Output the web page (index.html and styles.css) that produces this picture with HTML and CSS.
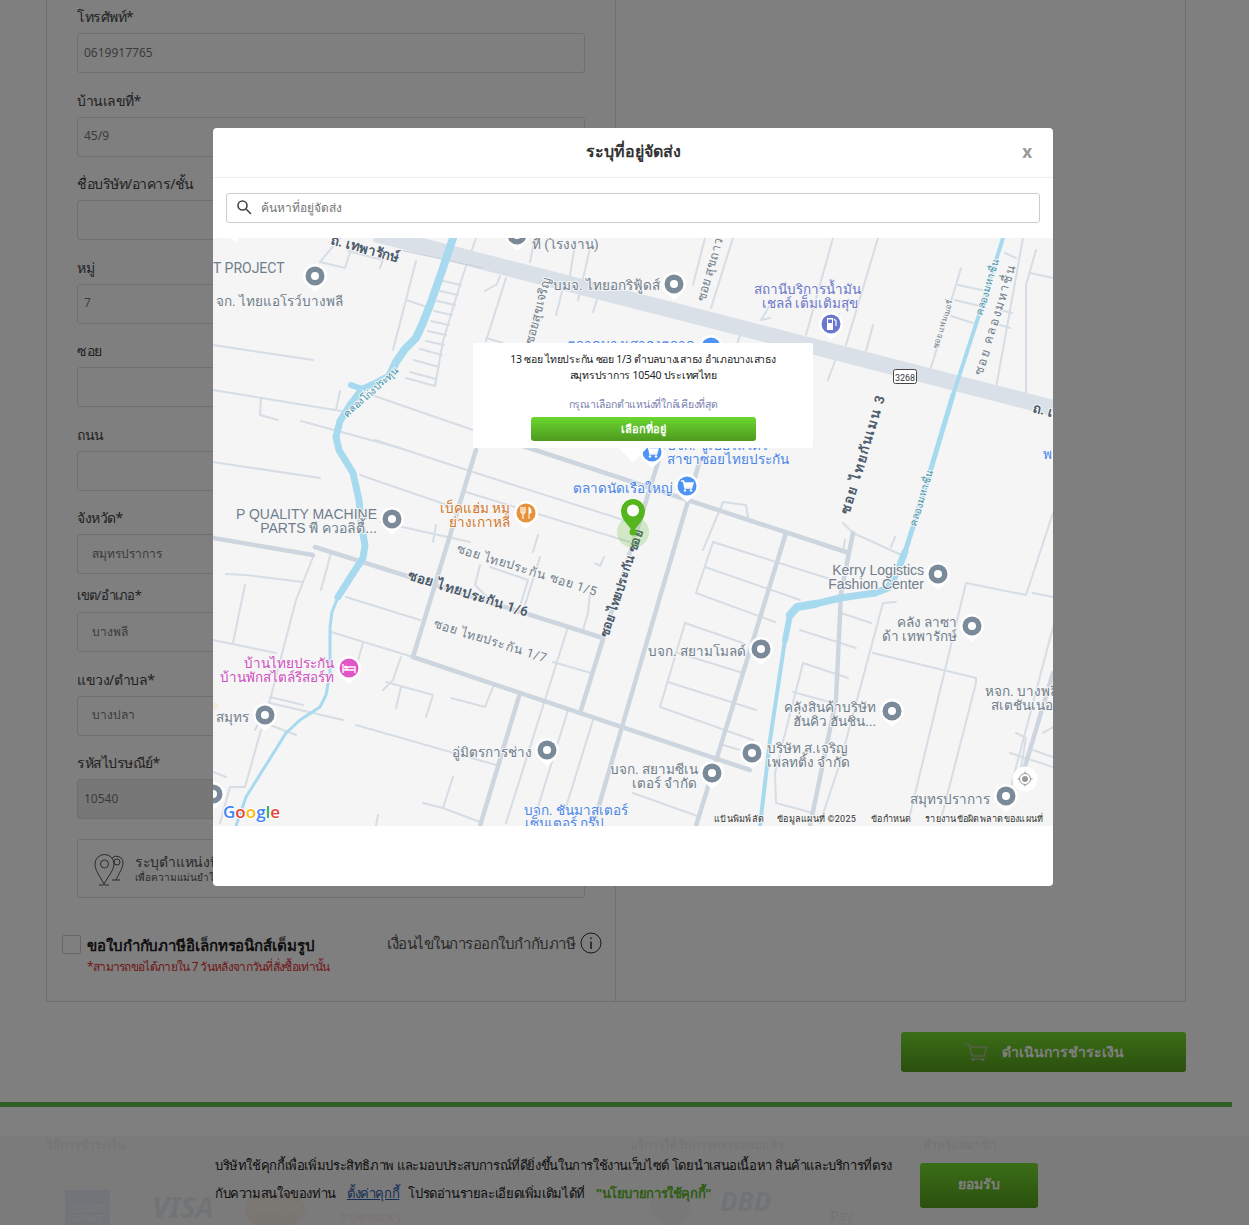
FILE: index.html
```html
<!DOCTYPE html>
<html lang="th">
<head>
  <meta charset="UTF-8">
  <meta name="viewport" content="width=device-width, initial-scale=1.0">
  <title>ระบุที่อยู่จัดส่ง</title>
  <link rel="stylesheet" href="styles.css">
</head>
<body>
  <div class="page">
    <div class="panel">
      <div class="col-left">
        <div class="field"><label>โทรศัพท์*</label><input type="text" value="0619917765" readonly></div>
        <div class="field"><label>บ้านเลขที่*</label><input type="text" value="45/9" readonly></div>
        <div class="field"><label>ชื่อบริษัท/อาคาร/ชั้น</label><input type="text" readonly></div>
        <div class="field"><label>หมู่</label><input type="text" value="7" readonly></div>
        <div class="field"><label>ซอย</label><input type="text" readonly></div>
        <div class="field"><label>ถนน</label><input type="text" readonly></div>
        <div class="field field-tight"><label>จังหวัด*</label><input class="indent" type="text" value="สมุทรปราการ" readonly></div>
        <div class="field"><label class="small">เขต/อำเภอ*</label><input class="indent" type="text" value="บางพลี" readonly></div>
        <div class="field"><label>แขวง/ตำบล*</label><input class="indent" type="text" value="บางปลา" readonly></div>
        <div class="field"><label>รหัสไปรษณีย์*</label><input class="disabled" type="text" value="10540" readonly></div>
        <div class="locate-box">
          <svg class="locate-icon" width="40" height="40" viewBox="0 0 40 40" fill="none" stroke="#555" stroke-width="1">
            <path d="M14 35 C9 26 5 21 5 15 A9.5 9.5 0 0 1 24 15 C24 21 19 26 14 35Z"/>
            <circle cx="14.500" cy="15" r="4"/>
            <path d="M9 36H19"/>
            <path d="M22 9 A6.500 6.500 0 0 1 33 14 C33 19 29 24 26 31"/>
            <circle cx="27" cy="13" r="3"/>
            <path d="M22 31H30"/>
          </svg>
          <div>
            <div class="locate-title">ระบุตำแหน่งที่จัดส่งบนแผนที่</div>
            <div class="locate-sub">เพื่อความแม่นยำในการจัดส่งสินค้า</div>
          </div>
        </div>
        <div class="tax-row">
          <span class="checkbox"></span>
          <div class="tax-text">
            <div class="tax-title">ขอใบกำกับภาษีอิเล็กทรอนิกส์เต็มรูป</div>
            <div class="tax-note">*สามารถขอได้ภายใน 7 วันหลังจากวันที่สั่งซื้อเท่านั้น</div>
          </div>
          <div class="tax-terms">เงื่อนไขในการออกใบกำกับภาษี
            <svg width="22" height="22" viewBox="0 0 22 22" fill="none" stroke="#333" stroke-width="1">
              <circle cx="11" cy="11" r="10"/>
              <path d="M11 9.500V17" stroke-width="1.500"/>
              <path d="M11 5.500V7" stroke-width="1.500"/>
            </svg>
          </div>
        </div>
      </div>
    </div>

    <div class="order-row">
      <button class="btn-order">
        <svg width="24" height="20" viewBox="0 0 24 20" fill="none" stroke="#bbb" stroke-width="1.200">
          <path d="M1 2H5L8 14H20L23 5H6"/>
          <path d="M7 17H21"/>
          <path d="M9 17V19M19 17V19" stroke-width="2"/>
        </svg>
        ดำเนินการชำระเงิน
      </button>
    </div>

    <div class="green-line"></div>

    <div class="footer">
      <div class="footer-cols">
        <div class="foot-title">วิธีการชำระเงิน</div>
        <div class="foot-title">บริการได้รับการตรวจสอบแล้ว</div>
        <div class="foot-title">สำหรับสมาชิก</div>
      </div>
      <div class="foot-logos">
        <span class="logo-counter">COUNTER SERVICE</span>
        <span class="logo-visa">VISA</span>
        <span class="logo-master">MasterCard</span>
        <span class="logo-true">truemoney</span>
        <span class="logo-ssl">SSL</span>
        <span class="logo-dbd">DBD</span>
        <span class="logo-pay">Pay</span>
      </div>
      <div class="cookie-bar">
        <div class="cookie-text">
          <p>บริษัทใช้คุกกี้เพื่อเพิ่มประสิทธิภาพ และมอบประสบการณ์ที่ดียิ่งขึ้นในการใช้งานเว็บไซต์ โดยนำเสนอเนื้อหา สินค้าและบริการที่ตรง</p>
          <p>กับความสนใจของท่าน <a class="cookie-link" href="#">ตั้งค่าคุกกี้</a> โปรดอ่านรายละเอียดเพิ่มเติมได้ที่ <b class="cookie-policy">"นโยบายการใช้คุกกี้"</b></p>
        </div>
        <button class="btn-accept">ยอมรับ</button>
      </div>
    </div>
  </div>

  <div class="overlay"></div>

  <div class="modal">
    <div class="modal-head">
      <h4>ระบุที่อยู่จัดส่ง</h4>
      <span class="modal-close">x</span>
    </div>
    <div class="search-wrap">
      <div class="search-box">
        <svg width="16" height="16" viewBox="0 0 16 16" fill="none" stroke="#444" stroke-width="1.600">
          <circle cx="6.500" cy="6.500" r="4.500"/>
          <path d="M10 10L15 15"/>
        </svg>
        <span>ค้นหาที่อยู่จัดส่ง</span>
      </div>
    </div>
    <div class="map">
      <svg class="map-svg" width="840" height="588" viewBox="213 238 840 588">
        <defs>
          <g id="pin">
            <path class="pin-halo" d="M0 16 L-8 9 A12 12 0 1 1 8 9Z"/>
            <circle r="9.500"/>
          </g>
          <g id="pin-gray">
            <use href="#pin" fill="#7b8a99"/>
            <circle r="4" fill="#fff"/>
          </g>
          <g id="ico-cart" fill="#fff">
            <path d="M-6 -5H-3.500L-2 2H4.500L6 -3H-3" fill="none" stroke="#fff" stroke-width="1.500"/>
            <path d="M-3 -3H5.500L4 1.500H-2Z"/>
            <circle cx="-2" cy="4.500" r="1.200"/>
            <circle cx="4" cy="4.500" r="1.200"/>
          </g>
        </defs>

        <rect x="213" y="238" width="840" height="588" fill="#f5f5f5"/>
        <path d="M213 700 L219 706 L213 712Z" fill="#f3eddc"/>

        <g class="road-thin">
          <!-- north west -->
          <path d="M213 345L313 360"/>
          <path d="M213 390L341 411"/>
          <path d="M261 398L260 415L278 420"/>
          <path d="M340 391L336 410"/>
          <path d="M301 421L400 448"/>
          <path d="M416 261L393 350"/>
          <path d="M406 300L430 308"/>
          <path d="M476 238L463 275L443 341L435 386L406 378"/>
          <path d="M461 285L443 281M458 295L440 291M455 305L437 301M452 315L434 311M449 325L431 321M446 335L428 331M444 345L426 341M442 355L420 349M439 367L414 360M436 379L410 372"/>
          <path d="M506 278L486 341"/>
          <path d="M486 338L503 343"/>
          <path d="M360 391L473 430"/>
          <path d="M340 238L320 262L345 268L353 243"/>
          <path d="M348 251L383 260L380 268"/>
          <path d="M500 276L497 284L485 291"/>
          <path d="M556 315L563 288"/>
          <path d="M575 245L570 275M590 248L578 300M600 290L593 312"/>
          <path d="M535 238L530 262"/>
          <!-- north east -->
          <path d="M705 238L693 285"/>
          <path d="M733 238L711 308"/>
          <path d="M833 238L806 335"/>
          <path d="M878 238L846 345"/>
          <path d="M873 325L866 351"/>
          <path d="M836 358L828 380"/>
          <path d="M961 268L930 371"/>
          <path d="M958 285L986 291M955 300L980 306M951 316L973 323"/>
          <path d="M1023 238L996 388"/>
          <path d="M1036 250L1026 285L1026 395"/>
          <path d="M1030 273L1053 278"/>
          <path d="M1005 253L1016 258"/>
          <path d="M740 335L733 358"/>
          <path d="M770 305L761 320L770 318"/>
          <path d="M1000 310L1012 313M1000 325L1010 328"/>
          <!-- middle west -->
          <path d="M213 462L320 478"/>
          <path d="M375 440L476 473L633 523"/>
          <path d="M360 475L453 507"/>
          <path d="M466 492L633 543"/>
          <path d="M380 522L470 542"/>
          <path d="M436 525L433 542"/>
          <path d="M538 535L533 552"/>
          <path d="M480 565L475 585L490 600L520 613"/>
          <path d="M490 567L528 580L521 603"/>
          <path d="M540 557L525 605"/>
          <path d="M604 557L600 566L595 563"/>
          <path d="M590 593L588 613"/>
          <path d="M588 613L583 630"/>
          <path d="M226 574L246 575L303 582"/>
          <path d="M245 585L233 643"/>
          <path d="M213 640L276 653"/>
          <path d="M331 553L321 590"/>
          <path d="M313 557L296 600L270 700L255 730"/>
          <path d="M346 597L420 620"/>
          <path d="M331 632L413 657"/>
          <path d="M363 643L356 667"/>
          <path d="M401 657L393 680L383 690"/>
          <path d="M386 682L433 695L426 717"/>
          <path d="M401 687L396 708"/>
          <path d="M451 698L485 707L493 687"/>
          <path d="M270 697L303 705"/>
          <path d="M270 703L343 720"/>
          <path d="M270 725L296 735"/>
          <path d="M356 725L496 765"/>
          <path d="M213 772L226 777"/>
          <path d="M261 730L245 787L230 787L220 823"/>
          <path d="M453 777L443 808L480 822"/>
          <path d="M423 803L443 808"/>
          <path d="M378 815L376 826"/>
          <path d="M568 627L506 823"/>
          <path d="M568 710L533 823"/>
          <path d="M593 720L566 807"/>
          <path d="M553 662L591 673"/>
          <!-- middle east -->
          <path d="M723 502L746 505L748 518"/>
          <path d="M723 502L703 550"/>
          <path d="M713 542L696 593L775 622"/>
          <path d="M713 542L833 580"/>
          <path d="M705 567L800 600"/>
          <path d="M685 623L660 707L753 740"/>
          <path d="M685 623L743 643"/>
          <path d="M678 653L743 673"/>
          <path d="M668 682L756 710"/>
          <path d="M633 793L700 817"/>
          <path d="M723 745L740 750"/>
          <path d="M800 630L856 648"/>
          <path d="M841 613L871 623"/>
          <path d="M803 663L848 678"/>
          <path d="M803 663L775 773L776 803L813 813"/>
          <path d="M793 692L833 703"/>
          <path d="M896 602L883 603L840 763L820 823"/>
          <path d="M873 653L976 678L976 683L940 823"/>
          <path d="M966 583L908 823"/>
          <path d="M966 583L1026 595L1053 513"/>
          <path d="M1033 593L1053 597"/>
          <path d="M1053 627L1010 790"/>
          <path d="M1016 733L1026 738L1020 773"/>
          <path d="M1010 753L1053 767"/>
          <path d="M1033 750L1053 757"/>
          <path d="M1043 733L1053 727"/>
          <path d="M853 533L906 557"/>
          <path d="M895 537L891 547"/>
          <path d="M843 523L853 533"/>
          <path d="M845 540L843 552"/>
        </g>

        <g class="road-mid">
          <path d="M213 538L313 555"/>
          <path d="M315 547L600 637"/>
          <path d="M413 657L750 770"/>
          <path d="M520 445L846 552"/>
          <path d="M476 450L413 657"/>
          <path d="M665 440L581 710"/>
          <path d="M700 460L593 826"/>
          <path d="M786 533L696 826"/>
          <path d="M520 693L480 826"/>
          <path d="M853 533L841 593L836 700L810 826"/>
          <path d="M1053 673L1023 773"/>
        </g>

        <path class="road-main" d="M375 234L1053 408"/>
        <path class="road-line" d="M400 250L483 268"/>

        <path class="river river-w8" d="M453 238L443 268L436 288L430 305L422 325L416 338L405 349L396 362L390 375"/>
        <path class="river river-w6" d="M390 375L375 383L362 389L351 385"/>
        <path class="river river-w7" d="M362 389L350 405L340 421L336 437L339 450L353 473L359 500L361 523L365 545L363 558L350 578L338 597"/>
        <path class="river river-w3" d="M338 597L332 612L330 627L330 673L326 695L320 707L300 720L286 733L266 765L246 797L236 826"/>
        <path class="river river-w4" d="M1003 238L978 318L953 395"/>
        <path class="river river-w5" d="M953 395L930 472L913 527L905 552"/>
        <path class="river river-w7" d="M905 552L897 572L888 588L875 593L840 598L815 604"/>
        <path class="river river-w8" d="M815 604L797 607L790 615"/>
        <path class="river river-w6" d="M790 615L785 640"/>
        <path class="river river-w4" d="M785 640L770 740L760 826"/>

        <text class="lbl dark bold" transform="translate(330 244) rotate(15)">ถ. เทพารักษ์</text>
        <text class="lbl" x="532" y="249">ที (โรงงาน)</text>
        <text class="lbl roboto" x="213" y="273">T PROJECT</text>
        <text class="lbl end" x="343" y="306">จก. ไทยแอโรว์บางพลี</text>
        <text class="lbl end" x="660" y="290">บมจ. ไทยอกริฟู้ดส์</text>
        <text class="lbl sm" transform="translate(533 345) rotate(-75)">ซอยสุขเจริญ</text>
        <text class="lbl sm" transform="translate(705 302) rotate(-74)">ซอย สุขถาวร</text>
        <text class="lbl purple mid" x="807" y="294">สถานีบริการน้ำมัน</text>
        <text class="lbl purple mid" x="810" y="308">เชลล์ เต็มเติมสุข</text>
        <text class="lbl blue" x="567" y="349">ตลาดบางเสาธงตลาด</text>
        <text class="lbl teal xs" transform="translate(347 418) rotate(-42)">คลองโก่งประทุน</text>
        <text class="lbl dark bold road-wider" transform="translate(849 515) rotate(-73)">ซอย ไทยกันเมน 3</text>
        <text class="lbl xxs" transform="translate(938 349) rotate(-73)">ซอย แฟมเมอรี่</text>
        <text class="lbl teal xs" transform="translate(982 316) rotate(-73)">คลองมหาชื่น</text>
        <text class="lbl sm road-wider" transform="translate(982 376) rotate(-73)">ซอย คลองมหาชื่น</text>
        <text class="lbl dark bold" transform="translate(1032 412) rotate(15)">ถ. เ</text>
        <text class="lbl teal xs" transform="translate(916 527) rotate(-73)">คลองมหาชื่น</text>
        <text class="lbl blue" x="1043" y="459">พ</text>
        <text class="lbl blue" x="667" y="450">บจก. ซูเปอร์สโตร์</text>
        <text class="lbl blue" x="667" y="464">สาขาซอยไทยประกัน</text>
        <text class="lbl blue end" x="673" y="493">ตลาดนัดเรือใหญ่</text>
        <text class="lbl orange end" x="510" y="513">เบ็คแฮ่ม หมู</text>
        <text class="lbl orange end" x="510" y="527">ย่างเกาหลี</text>
        <text class="lbl latin end" x="377" y="519">P QUALITY MACHINE</text>
        <text class="lbl latin end" x="377" y="533">PARTS พี ควอลิตี้...</text>
        <text class="lbl sm road-wide" transform="translate(456 552) rotate(17.500)">ซอย ไทยประกัน ซอย 1/5</text>
        <text class="lbl dark bold road-wide" transform="translate(407 579) rotate(17.500)">ซอย ไทยประกัน 1/6</text>
        <text class="lbl sm road-wide" transform="translate(433 627) rotate(17.500)">ซอย ไทยประกัน 1/7</text>
        <text class="lbl dark bold sm" transform="translate(608 638) rotate(-72)">ซอย ไทยประกัน ซอย</text>
        <text class="lbl pink end" x="334" y="668">บ้านไทยประกัน</text>
        <text class="lbl pink end" x="334" y="682">บ้านพักสไตล์รีสอร์ท</text>
        <text class="lbl end" x="249" y="722">สมุทร</text>
        <text class="lbl end" x="532" y="757">อู่มิตรการช่าง</text>
        <text class="lbl end" x="746" y="656">บจก. สยามโมลด์</text>
        <text class="lbl latin end" x="924" y="575">Kerry Logistics</text>
        <text class="lbl latin end" x="924" y="589">Fashion Center</text>
        <text class="lbl end" x="957" y="627">คลัง ลาซา</text>
        <text class="lbl end" x="957" y="641">ด้า เทพารักษ์</text>
        <text class="lbl" x="985" y="696">หจก. บางพลี</text>
        <text class="lbl" x="991" y="710">สเตชันเนอรี่</text>
        <text class="lbl end" x="876" y="712">คลังสินค้าบริษัท</text>
        <text class="lbl end" x="876" y="726">ฮั่นคิว ฮันชิน...</text>
        <text class="lbl" x="767" y="753">บริษัท ส.เจริญ</text>
        <text class="lbl" x="767" y="767">เพลทติ้ง จำกัด</text>
        <text class="lbl end" x="698" y="774">บจก. สยามซีเน</text>
        <text class="lbl end" x="697" y="788">เตอร์ จำกัด</text>
        <text class="lbl blue" x="524" y="815">บจก. ชันมาสเตอร์</text>
        <text class="lbl blue" x="525" y="828">เซ็นเตอร์ กรุ๊ป</text>
        <text class="lbl end" x="990" y="804">สมุทรปราการ</text>

        <g class="shield">
          <rect x="893.500" y="369.500" width="23" height="14" rx="2"/>
          <text x="905" y="381">3268</text>
        </g>

        <use href="#pin-gray" x="235" y="226"/>
        <use href="#pin-gray" x="517" y="235"/>
        <use href="#pin-gray" x="315" y="276"/>
        <use href="#pin-gray" x="674" y="284"/>
        <use href="#pin-gray" x="392" y="519"/>
        <use href="#pin-gray" x="265" y="715"/>
        <use href="#pin-gray" x="213" y="794"/>
        <use href="#pin-gray" x="547" y="750"/>
        <use href="#pin-gray" x="761" y="649"/>
        <use href="#pin-gray" x="938" y="574"/>
        <use href="#pin-gray" x="972" y="626"/>
        <use href="#pin-gray" x="892" y="711"/>
        <use href="#pin-gray" x="752" y="753"/>
        <use href="#pin-gray" x="712" y="773"/>
        <use href="#pin-gray" x="1006" y="796"/>

        <g transform="translate(831 324)">
          <use href="#pin" fill="#6b76cf"/>
          <path d="M-4 -6H2V6H-4Z M-3 -4.500V-1H1V-4.500Z" fill="#fff" fill-rule="evenodd"/>
          <path d="M3 -5L5 -3V2" fill="none" stroke="#fff" stroke-width="1.200"/>
        </g>
        <g transform="translate(711 347)">
          <use href="#pin" fill="#4e93f5"/>
        </g>
        <g transform="translate(652 452)">
          <use href="#pin" fill="#4e93f5"/>
          <use href="#ico-cart"/>
        </g>
        <g transform="translate(687 486)">
          <use href="#pin" fill="#4e93f5"/>
          <use href="#ico-cart"/>
        </g>
        <g transform="translate(526 513)">
          <use href="#pin" fill="#e8913a"/>
          <path d="M-5 -6V-1A1.500 1.500 0 0 0 -3 0V6M-3 -6V-1M-1 -6V-1A1.500 1.500 0 0 1 -3 0" fill="none" stroke="#fff" stroke-width="1.200"/>
          <path d="M3 6V-6C5 -5 5 -1 5 0H3" fill="#fff" stroke="#fff" stroke-width="1"/>
        </g>
        <g transform="translate(349 668)">
          <use href="#pin" fill="#e056c5"/>
          <path d="M-6 -4V5M-6 2H6V5M6 2V-1H-2V2" fill="none" stroke="#fff" stroke-width="1.300"/>
          <circle cx="-3.500" cy="-1" r="1.500" fill="#fff"/>
        </g>

        <circle class="marker-ring" cx="633" cy="532" r="16"/>
        <circle class="marker-dot" cx="633" cy="532" r="3.500"/>
        <path class="marker" d="M633 533 C630 525 621 521 621 511 A12 12 0 0 1 645 511 C645 521 636 525 633 533Z"/>
        <circle cx="633" cy="510.500" r="6" fill="#fff"/>

        <g class="locate-btn">
          <circle cx="1025" cy="779" r="12.500"/>
          <circle class="target" cx="1025" cy="779" r="5.500"/>
          <circle class="target-dot" cx="1025" cy="779" r="3"/>
          <path class="target" d="M1025 771.500V774M1025 784V786.500M1017.500 779H1020M1030 779H1032.500"/>
        </g>

        <text class="google" x="223" y="818"><tspan fill="#4285f4">G</tspan><tspan fill="#ea4335">o</tspan><tspan fill="#fbbc05">o</tspan><tspan fill="#4285f4">g</tspan><tspan fill="#34a853">l</tspan><tspan fill="#ea4335">e</tspan></text>
        <g class="attrib">
          <text x="714" y="822">แป้นพิมพ์ลัด</text>
          <text x="777" y="822">ข้อมูลแผนที่ ©2025</text>
          <text x="871" y="822">ข้อกำหนด</text>
          <text x="925" y="822">รายงานข้อผิดพลาดของแผนที่</text>
        </g>
      </svg>

      <div class="popup">
        <div class="popup-addr">13 ซอย ไทยประกัน ซอย 1/3 ตำบลบางเสาธง อำเภอบางเสาธง<br>สมุทรปราการ 10540 ประเทศไทย</div>
        <div class="popup-hint">กรุณาเลือกตำแหน่งที่ใกล้เคียงที่สุด</div>
        <button class="popup-btn">เลือกที่อยู่</button>
      </div>
    </div>
  </div>
</body>
</html>
```

FILE: styles.css
```css
html, body {
  margin: 0;
  padding: 0;
  height: 1225px;
  overflow: hidden;
}
body {
  font-family: "Noto Sans", "Open Sans", sans-serif;
  color: #333;
  background: #fff;
  position: relative;
}
.panel {
  margin-left: 46px;
  width: 1140px;
  height: 1002px;
  box-sizing: border-box;
  border: 1px solid #ddd;
  border-top: none;
}
.col-left {
  width: 569px;
  height: 100%;
  padding: 6px 0 0 30px;
  box-sizing: border-box;
  border-right: 1px solid #ddd;
}
.field {
  width: 508px;
  margin-bottom: 16.500px;
}
.field-tight {
  margin-bottom: 11px;
}
.field label {
  display: block;
  height: 20px;
  line-height: 21px;
  margin-bottom: 7px;
  font-size: 14px;
  letter-spacing: -0.5px;
  color: #444;
}
.field label.small {
  font-size: 13px;
}
.field input {
  display: block;
  width: 100%;
  height: 40px;
  box-sizing: border-box;
  padding: 0 6px 2px;
  font-family: inherit;
  font-size: 12px;
  color: #777;
  border: 1px solid #ddd;
  border-radius: 3px;
  background: #fff;
}
.field input.indent {
  padding-left: 14px;
}
.field input.disabled {
  background: #eee;
}
.locate-box {
  width: 508px;
  height: 59px;
  box-sizing: border-box;
  border: 1px solid #ddd;
  border-radius: 3px;
  margin-top: 20px;
  display: flex;
  align-items: center;
  gap: 5px;
  padding-left: 12px;
}
.locate-title {
  font-size: 14px;
  letter-spacing: -0.3px;
  color: #555;
  line-height: 18px;
}
.locate-sub {
  font-size: 10px;
  color: #555;
  line-height: 13px;
}
.tax-row {
  display: flex;
  margin: 34px 0 0 -15px;
  width: 540px;
}
.checkbox {
  flex: none;
  width: 17px;
  height: 17px;
  border: 1px solid #ccc;
  border-radius: 2px;
  background: #fff;
  margin: 3px 6px 0 0;
}
.tax-text {
  width: 300px;
  flex: none;
}
.tax-title {
  font-size: 15px;
  font-weight: 700;
  letter-spacing: -0.1px;
  color: #222;
  line-height: 26px;
}
.tax-note {
  font-size: 12px;
  letter-spacing: -0.7px;
  color: #d33;
  line-height: 18px;
}
.tax-terms {
  display: flex;
  align-items: flex-start;
  gap: 5px;
  font-size: 15px;
  letter-spacing: -0.5px;
  color: #555;
  line-height: 22px;
  white-space: nowrap;
}
.order-row {
  display: flex;
  justify-content: flex-end;
  width: 1186px;
  margin-top: 30px;
}
.btn-order {
  width: 285px;
  height: 40px;
  border: none;
  border-radius: 3px;
  background: linear-gradient(#76dc2e, #559f1c);
  color: #fff;
  font-family: inherit;
  font-size: 14px;
  font-weight: 700;
  display: flex;
  align-items: center;
  justify-content: center;
  gap: 14px;
}
.green-line {
  width: 1232px;
  height: 5px;
  margin-top: 30px;
  background: #5fbe4a;
}
.footer {
  position: relative;
  margin-top: 29px;
  height: 89px;
  overflow: hidden;
}
.footer-cols {
  display: flex;
  padding-left: 46px;
  font-size: 12px;
  line-height: 18px;
  color: #555;
}
.foot-title:nth-child(1) {
  width: 584px;
}
.foot-title:nth-child(2) {
  width: 293px;
}
.foot-logos {
  display: flex;
  align-items: flex-end;
  margin: 36px 0 0 65px;
  height: 35px;
  color: #2a6ea8;
  white-space: nowrap;
}
.logo-counter {
  width: 45px;
  height: 35px;
  background: #3a7fc0;
  color: #fff;
  font-size: 8px;
  line-height: 10px;
  padding-top: 14px;
  box-sizing: border-box;
  white-space: normal;
  text-align: center;
  overflow: hidden;
}
.logo-visa {
  margin-left: 42px;
  width: 62px;
  font-size: 29px;
  line-height: 36px;
  font-weight: 700;
  font-style: italic;
}
.logo-master {
  margin-left: 31px;
  width: 60px;
  height: 32px;
  border-radius: 16px;
  background: #e89a50;
  color: #fff;
  font-size: 9px;
  line-height: 32px;
  text-align: center;
}
.logo-true {
  margin-left: 35px;
  width: 60px;
  color: #e06030;
  font-size: 12px;
}
.logo-ssl {
  margin-left: 250px;
  width: 40px;
  height: 35px;
  border-radius: 50%;
  background: #ccc;
  font-size: 12px;
  line-height: 35px;
  text-align: center;
  color: #888;
}
.logo-dbd {
  margin-left: 30px;
  width: 80px;
  font-size: 26px;
  line-height: 48px;
  font-weight: 700;
  font-style: italic;
}
.logo-pay {
  margin-left: 30px;
  font-size: 14px;
}
.cookie-bar {
  position: absolute;
  inset: 0;
  background: rgba(245, 245, 245, 0.9);
  padding-left: 215px;
  display: flex;
  align-items: flex-start;
}
.cookie-text {
  width: 705px;
  flex: none;
  font-size: 13px;
  letter-spacing: -0.38px;
  color: #222;
  padding-top: 15px;
}
.cookie-text p {
  margin: 0;
  height: 28px;
  line-height: 28px;
  white-space: nowrap;
}
.cookie-link {
  color: #2a5caa;
  margin: 0 6px 0 8px;
}
.cookie-policy {
  color: #5fb82a;
  margin-left: 8px;
}
.btn-accept {
  width: 118px;
  height: 45px;
  margin-top: 27px;
  padding-bottom: 4px;
  border: none;
  border-radius: 3px;
  background: linear-gradient(#76dc2e, #559f1c);
  color: #fff;
  font-family: inherit;
  font-size: 14px;
  font-weight: 700;
}
.overlay {
  position: absolute;
  inset: 0;
  background: rgba(0, 0, 0, 0.5);
}
.modal {
  position: absolute;
  left: 213px;
  top: 128px;
  width: 840px;
  height: 758px;
  background: #fff;
  border-radius: 4px;
  overflow: hidden;
}
.modal-head {
  height: 49px;
  border-bottom: 1px solid #eee;
  position: relative;
}
.modal-head h4 {
  margin: 0;
  text-align: center;
  font-size: 16px;
  font-weight: 700;
  line-height: 46px;
  color: #333;
}
.modal-close {
  position: absolute;
  right: 21px;
  top: 12px;
  font-size: 17px;
  font-weight: 700;
  color: #999;
}
.search-wrap {
  padding: 15px 13px;
  height: 30px;
}
.search-box {
  height: 30px;
  box-sizing: border-box;
  border: 1px solid #ccc;
  border-radius: 3px;
  display: flex;
  align-items: center;
  gap: 9px;
  padding: 0 0 2px 9px;
  font-size: 12px;
  color: #777;
}
.map {
  position: relative;
  width: 840px;
  height: 588px;
  overflow: hidden;
  background: #f5f5f5;
}
.map-svg {
  display: block;
}
.road-thin path, .road-mid path, .road-main, .road-line, .river {
  fill: none;
  stroke-linecap: round;
  stroke-linejoin: round;
}
.road-thin path {
  stroke: #d6dde4;
  stroke-width: 2;
}
.road-mid path {
  stroke: #cdd6df;
  stroke-width: 4.500;
}
.road-main {
  stroke: #d9e0e8;
  stroke-width: 16;
  stroke-linecap: butt;
}
.road-line {
  stroke: #c6ced6;
  stroke-width: 1;
}
.river {
  stroke: #a8daef;
}
.river-w8 { stroke-width: 8; }
.river-w7 { stroke-width: 7; }
.river-w6 { stroke-width: 6; }
.river-w5 { stroke-width: 5; }
.river-w4 { stroke-width: 4; }
.river-w3 { stroke-width: 3; }
.lbl {
  font-family: Roboto, "Noto Sans", sans-serif;
  font-size: 13.500px;
  fill: #707e8c;
  stroke: #f5f5f5;
  stroke-width: 2px;
  paint-order: stroke;
}
.lbl.latin {
  font-family: "Liberation Sans", sans-serif;
  font-size: 14px;
}
.lbl.roboto { font-size: 14px; }
.lbl.end { text-anchor: end; }
.lbl.mid { text-anchor: middle; }
.lbl.sm { font-size: 12.500px; }
.lbl.xs { font-size: 10px; }
.lbl.xxs { font-size: 8px; }
.lbl.bold { font-weight: 700; }
.lbl.road-wide { letter-spacing: 0.6px; }
.lbl.road-wider { letter-spacing: 1.500px; }
.lbl.dark { fill: #4e5d6d; }
.lbl.blue { fill: #4a86e8; }
.lbl.purple { fill: #6b76c8; }
.lbl.orange { fill: #d2772a; }
.lbl.pink { fill: #d04fc0; }
.lbl.teal { fill: #3c93ad; }
.pin-halo {
  fill: #fff;
}
.shield rect {
  fill: #fff;
  stroke: #444;
}
.shield text {
  font-family: Roboto, sans-serif;
  font-size: 9px;
  text-anchor: middle;
  fill: #333;
}
.marker {
  fill: #55b51d;
}
.marker-ring {
  fill: rgba(85, 181, 29, 0.22);
}
.marker-dot {
  fill: #55b51d;
}
.locate-btn > circle:first-child {
  fill: #fff;
}
.target {
  fill: none;
  stroke: #999;
}
.target-dot {
  fill: #999;
}
.google {
  font-family: "Open Sans", Roboto, sans-serif;
  font-size: 17px;
  font-weight: 600;
  stroke: #fff;
  stroke-width: 2px;
  paint-order: stroke;
}
.attrib text {
  font-family: Roboto, "Noto Sans", sans-serif;
  font-size: 9px;
  letter-spacing: 0.25px;
  fill: #333;
  stroke: #f5f5f5;
  stroke-width: 2px;
  paint-order: stroke;
}
.popup {
  position: absolute;
  left: 260px;
  top: 105px;
  width: 340px;
  height: 105px;
  background: #fff;
  border-radius: 2px;
  text-align: center;
  font-size: 10.500px;
  letter-spacing: -0.25px;
  box-sizing: border-box;
  padding-top: 8px;
}
.popup::after {
  content: "";
  position: absolute;
  left: 146px;
  bottom: -15px;
  border-left: 14px solid transparent;
  border-right: 14px solid transparent;
  border-top: 15px solid #fff;
}
.popup-addr {
  color: #222;
  line-height: 16px;
}
.popup-hint {
  margin-top: 14px;
  line-height: 14px;
  color: #7a7fb0;
}
.popup-btn {
  display: block;
  width: 225px;
  height: 24px;
  margin: 6px auto 0;
  border: none;
  border-radius: 3px;
  background: linear-gradient(#6bd72f, #4e9a1f);
  color: #fff;
  font-family: inherit;
  font-size: 11px;
  font-weight: 700;
}
```
